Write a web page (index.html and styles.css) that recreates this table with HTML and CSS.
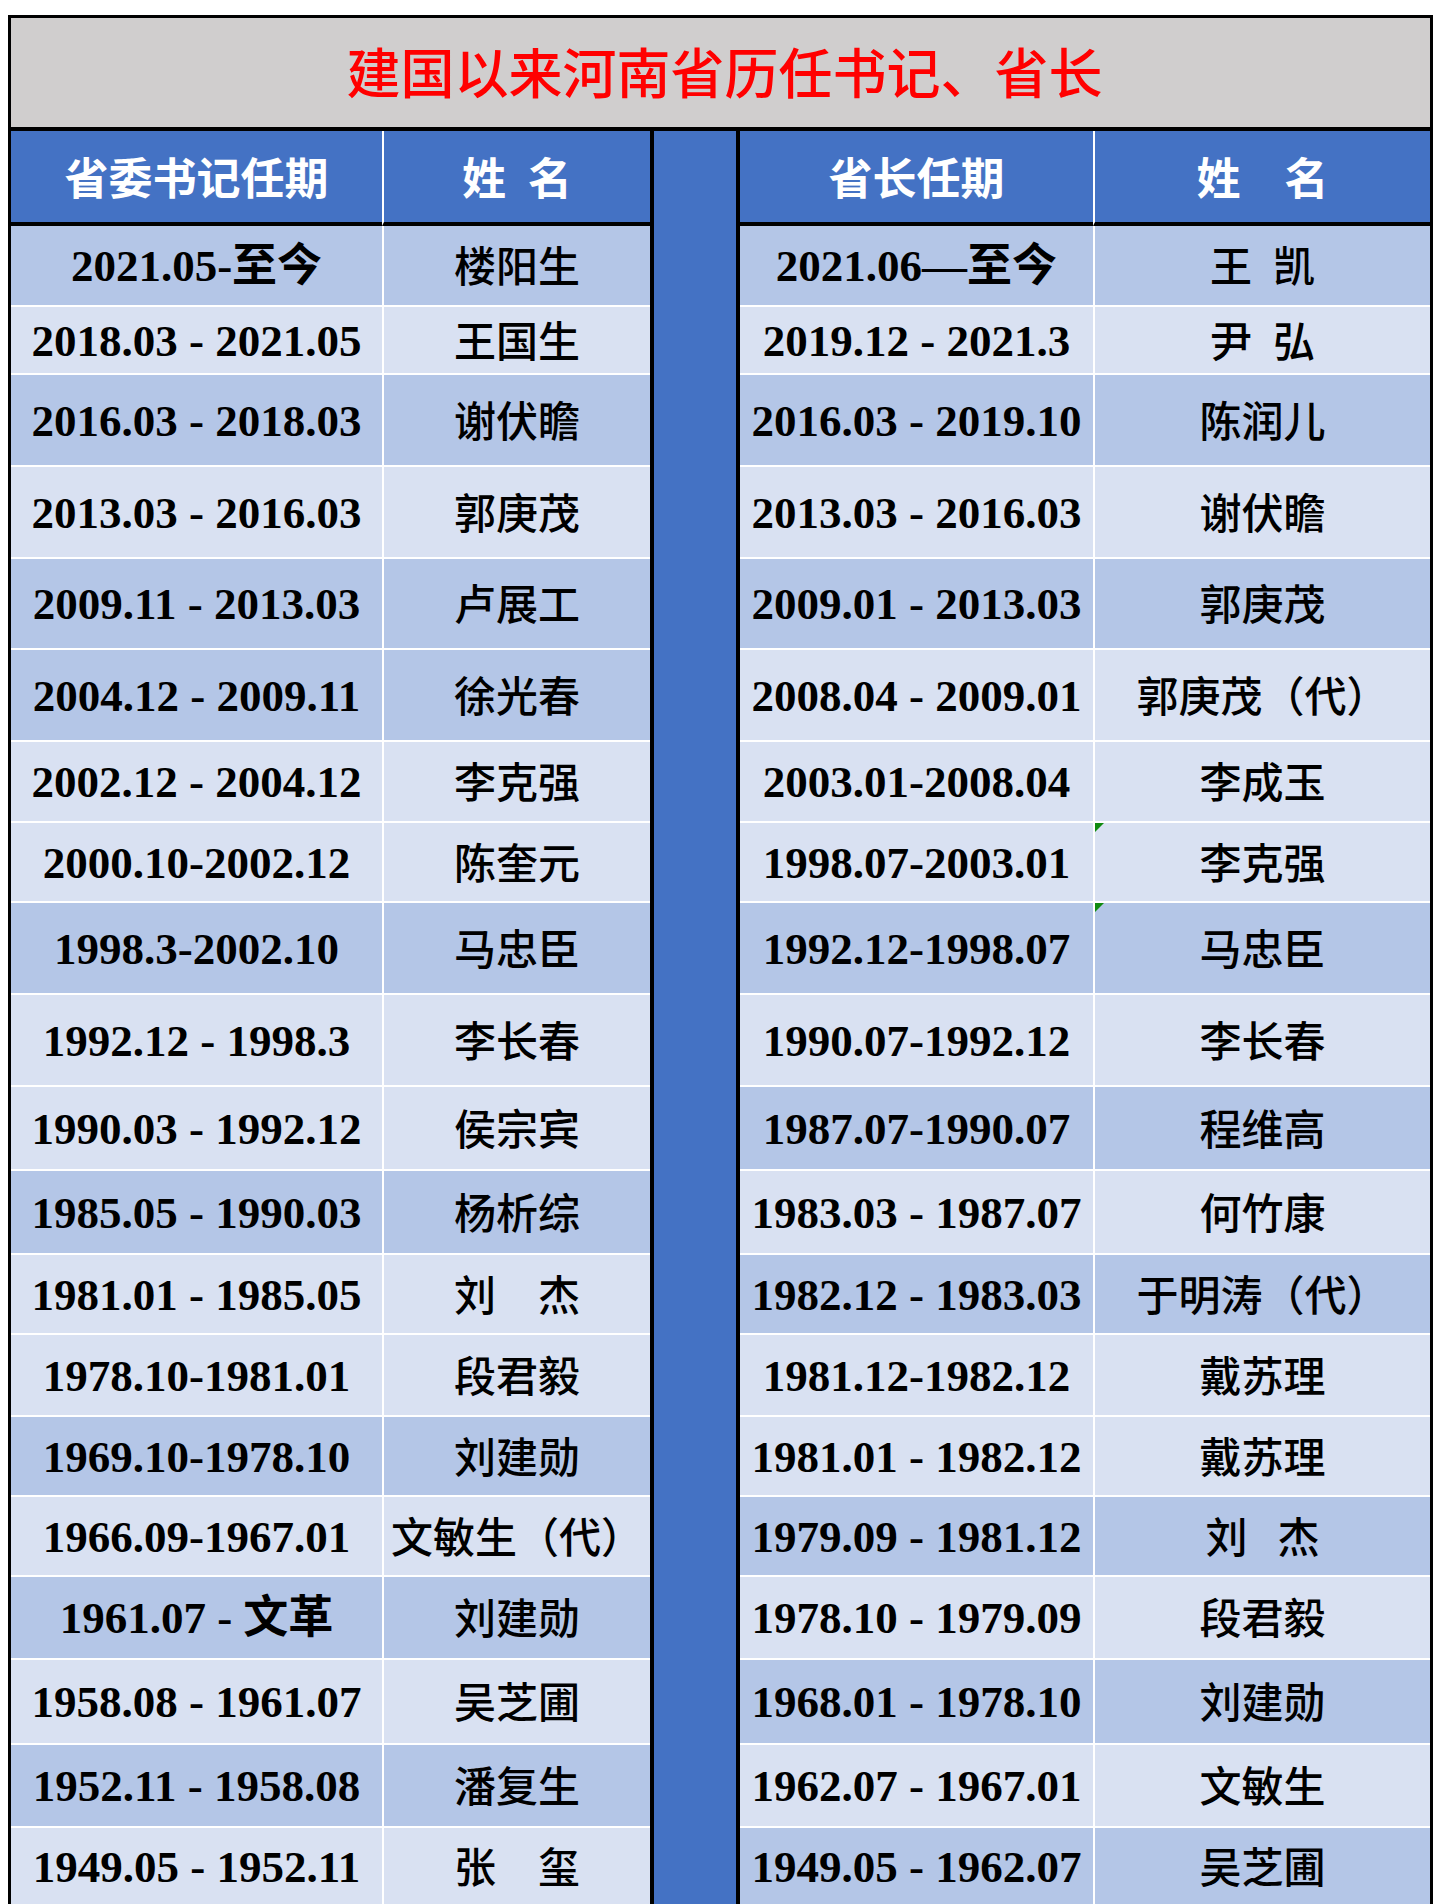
FILE: index.html
```html
<!DOCTYPE html>
<html lang="zh-CN">
<head>
<meta charset="utf-8">
<title>建国以来河南省历任书记、省长</title>
<link rel="stylesheet" href="styles.css">
</head>
<body>
<div class="sheet">
  <div class="title">建国以来河南省历任书记、省长</div>
  <div class="grid">
    <div class="mid"></div>

    <div class="cell hd">省委书记任期</div>
    <div class="cell hd nm">姓&ensp;名</div>
    <div class="cell hd">省长任期</div>
    <div class="cell hd nm">姓　名</div>

    <div class="cell d dk first">2021.05-至今</div>
    <div class="cell n dk first">楼阳生</div>
    <div class="cell d dk first">2021.06—至今</div>
    <div class="cell n dk first">王&ensp;凯</div>

    <div class="cell d lt">2018.03 - 2021.05</div>
    <div class="cell n lt">王国生</div>
    <div class="cell d lt">2019.12 - 2021.3</div>
    <div class="cell n lt">尹&ensp;弘</div>

    <div class="cell d dk">2016.03 - 2018.03</div>
    <div class="cell n dk">谢伏瞻</div>
    <div class="cell d dk">2016.03 - 2019.10</div>
    <div class="cell n dk">陈润儿</div>

    <div class="cell d lt">2013.03 - 2016.03</div>
    <div class="cell n lt">郭庚茂</div>
    <div class="cell d lt">2013.03 - 2016.03</div>
    <div class="cell n lt">谢伏瞻</div>

    <div class="cell d dk">2009.11 - 2013.03</div>
    <div class="cell n dk">卢展工</div>
    <div class="cell d dk">2009.01 - 2013.03</div>
    <div class="cell n dk">郭庚茂</div>

    <div class="cell d dk">2004.12 - 2009.11</div>
    <div class="cell n dk">徐光春</div>
    <div class="cell d lt">2008.04 - 2009.01</div>
    <div class="cell n lt">郭庚茂（代）</div>

    <div class="cell d lt">2002.12 - 2004.12</div>
    <div class="cell n lt">李克强</div>
    <div class="cell d lt">2003.01-2008.04</div>
    <div class="cell n lt">李成玉</div>

    <div class="cell d lt">2000.10-2002.12</div>
    <div class="cell n lt">陈奎元</div>
    <div class="cell d lt">1998.07-2003.01</div>
    <div class="cell n lt flag">李克强</div>

    <div class="cell d dk">1998.3-2002.10</div>
    <div class="cell n dk">马忠臣</div>
    <div class="cell d dk">1992.12-1998.07</div>
    <div class="cell n dk flag">马忠臣</div>

    <div class="cell d lt">1992.12 - 1998.3</div>
    <div class="cell n lt">李长春</div>
    <div class="cell d lt">1990.07-1992.12</div>
    <div class="cell n lt">李长春</div>

    <div class="cell d lt">1990.03 - 1992.12</div>
    <div class="cell n lt">侯宗宾</div>
    <div class="cell d dk">1987.07-1990.07</div>
    <div class="cell n dk">程维高</div>

    <div class="cell d dk">1985.05 - 1990.03</div>
    <div class="cell n dk">杨析综</div>
    <div class="cell d lt">1983.03 - 1987.07</div>
    <div class="cell n lt">何竹康</div>

    <div class="cell d lt">1981.01 - 1985.05</div>
    <div class="cell n lt">刘　杰</div>
    <div class="cell d dk">1982.12 - 1983.03</div>
    <div class="cell n dk">于明涛（代）</div>

    <div class="cell d lt">1978.10-1981.01</div>
    <div class="cell n lt">段君毅</div>
    <div class="cell d lt">1981.12-1982.12</div>
    <div class="cell n lt">戴苏理</div>

    <div class="cell d dk">1969.10-1978.10</div>
    <div class="cell n dk">刘建勋</div>
    <div class="cell d lt">1981.01 - 1982.12</div>
    <div class="cell n lt">戴苏理</div>

    <div class="cell d lt">1966.09-1967.01</div>
    <div class="cell n lt">文敏生（代）</div>
    <div class="cell d dk">1979.09 - 1981.12</div>
    <div class="cell n dk">刘<span class="gap"></span>杰</div>

    <div class="cell d dk">1961.07 - 文革</div>
    <div class="cell n dk">刘建勋</div>
    <div class="cell d lt">1978.10 - 1979.09</div>
    <div class="cell n lt">段君毅</div>

    <div class="cell d lt">1958.08 - 1961.07</div>
    <div class="cell n lt">吴芝圃</div>
    <div class="cell d dk">1968.01 - 1978.10</div>
    <div class="cell n dk">刘建勋</div>

    <div class="cell d dk">1952.11 - 1958.08</div>
    <div class="cell n dk">潘复生</div>
    <div class="cell d lt">1962.07 - 1967.01</div>
    <div class="cell n lt">文敏生</div>

    <div class="cell d lt">1949.05 - 1952.11</div>
    <div class="cell n lt">张　玺</div>
    <div class="cell d dk">1949.05 - 1962.07</div>
    <div class="cell n dk">吴芝圃</div>
  </div>
</div>
</body>
</html>
```

FILE: styles.css
```css
html, body {
  margin: 0;
  padding: 0;
  background: #ffffff;
}

.sheet {
  margin: 15px 0 0 8px;
  width: 1425px;
  box-sizing: border-box;
  border: 3px solid #000000;
  border-bottom: 0;
}

.title {
  height: 105px;
  padding-bottom: 4px;
  padding-left: 8px;
  background: #d0cece;
  border-bottom: 4px solid #000000;
  display: flex;
  align-items: center;
  justify-content: center;
  color: #ff0000;
  font-family: "Noto Sans CJK SC", sans-serif;
  font-weight: 500;
  font-size: 54px;
  line-height: 1;
}

.grid {
  display: grid;
  grid-template-columns: 371px 268px 90px 353px 337px;
  grid-template-rows:
    95px 79px 68px 92px 92px 91px 92px 81px 80px 92px 92px
    84px 84px 80px 82px 80px 80px 83px 85px 83px 78px;
}

.mid {
  grid-column: 3;
  grid-row: 1 / -1;
  background: #4472c4;
  border-left: 4px solid #000000;
  border-right: 4px solid #000000;
}

.cell {
  display: flex;
  align-items: center;
  justify-content: center;
  box-sizing: border-box;
  white-space: nowrap;
  line-height: 1;
  color: #000000;
  position: relative;
}

.hd {
  background: #4472c4;
  color: #ffffff;
  font-family: "Noto Sans CJK SC", sans-serif;
  font-weight: 700;
  font-size: 44px;
  border-bottom: 4px solid #000000;
  padding-bottom: 2px;
}

.nm,
.n {
  border-left: 2px solid #ffffff;
}

.d,
.n {
  border-top: 2px solid #ffffff;
}

.first {
  border-top: 0;
}

.d {
  font-family: "Liberation Serif", "Noto Sans CJK SC", serif;
  font-weight: 700;
  font-size: 45px;
  padding-top: 2px;
}

.n {
  font-family: "Noto Sans CJK SC", sans-serif;
  font-weight: 500;
  font-size: 42px;
  padding-bottom: 3px;
}

.dk {
  background: #b4c6e7;
}

.lt {
  background: #d9e1f2;
}

.gap {
  display: inline-block;
  width: 30px;
}

.flag::before {
  content: "";
  position: absolute;
  left: 0;
  top: 0;
  width: 0;
  height: 0;
  border-top: 9px solid #108a10;
  border-right: 9px solid transparent;
}
```
